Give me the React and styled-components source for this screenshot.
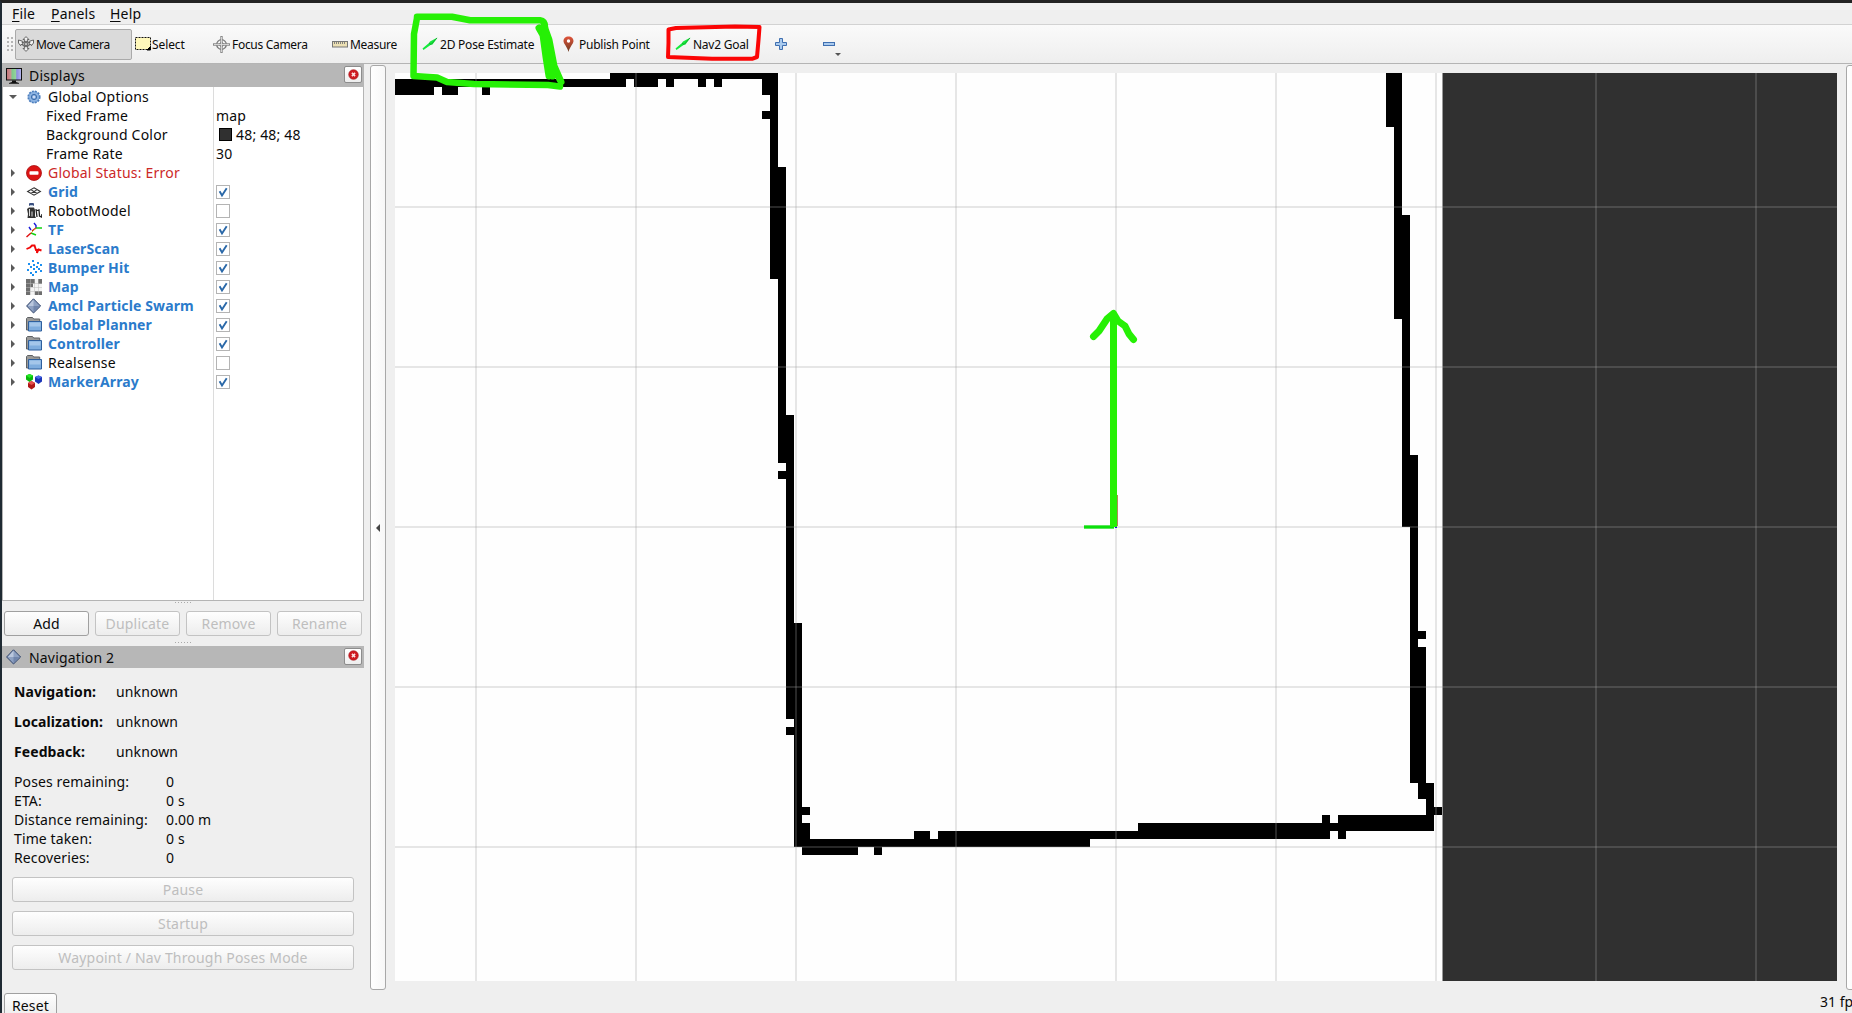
import React from 'react';
import styled, { createGlobalStyle } from 'styled-components';

const GlobalStyle = createGlobalStyle`
  * { box-sizing: border-box; }
  body { margin: 0; overflow: hidden; background: #efefef; }
  svg { display: block; flex: none; }
`;

const FONT = `"Noto Sans", "Open Sans", sans-serif`;

const Window = styled.div`
  position: relative;
  display: flex;
  flex-direction: column;
  width: 1852px;
  height: 1013px;
  overflow: hidden;
  background: #efefef;
  border-top: 3px solid #222;
  border-left: 2px solid #1f2a33;
  font-family: ${FONT};
  font-size: 14px;
  letter-spacing: 0.18px;
  color: #0a0a0a;
  white-space: nowrap;
`;

const MenuBar = styled.nav`
  display: flex;
  flex: none;
  height: 22px;
  padding-left: 10px;
  border-bottom: 1px solid #d2d2d2;
`;

const MenuItem = styled.span`
  width: ${(p) => p.$w}px;
  line-height: 21px;
`;

const Mnemonic = styled.span`
  text-decoration: underline;
  text-underline-offset: 2px;
`;

const ToolBar = styled.div`
  display: flex;
  flex: none;
  align-items: center;
  height: 39px;
  padding-left: 4px;
  background: linear-gradient(#fafafa, #eeeeee);
  border-bottom: 1px solid #b4b4b4;
`;

const Grip = styled.div`
  width: 9px;
  height: 17px;
  background-image: radial-gradient(circle, #b5b5b5 0.8px, transparent 1px);
  background-size: 4px 4px;
`;

const Tool = styled.button`
  display: flex;
  flex: none;
  align-items: center;
  gap: ${(p) => p.$gap ?? 2}px;
  width: ${(p) => p.$w}px;
  height: 31px;
  padding: 0 0 0 2px;
  border: 1px solid ${(p) => (p.$active ? '#aaaaaa' : 'transparent')};
  border-radius: 2px;
  background: ${(p) => (p.$active ? '#dadada' : 'transparent')};
  font: 12px ${FONT};
  letter-spacing: ${(p) => p.$ls ?? -0.22}px;
  color: #0a0a0a;
`;

const Body = styled.div`
  display: flex;
  flex: none;
  height: 926px;
`;

const SidePanel = styled.aside`
  display: flex;
  flex-direction: column;
  flex: none;
  width: 362px;
`;

const DockTitle = styled.div`
  display: flex;
  flex: none;
  align-items: center;
  height: ${(p) => p.$h}px;
  padding: 0 2px 0 4px;
  background: #b7b7b7;
`;

const DockName = styled.span`
  flex: 1;
  padding-left: 7px;
`;

const CloseButton = styled.button`
  display: flex;
  align-items: center;
  justify-content: center;
  width: 18px;
  height: 17px;
  padding: 0;
  margin-bottom: 2px;
  border: 1px solid #8d8d8d;
  border-radius: 2px;
  background: linear-gradient(#fff, #eee);
`;

const Tree = styled.div`
  flex: none;
  height: 514px;
  background: linear-gradient(#dcdcdc, #dcdcdc) 210px 0 / 1px 100% no-repeat #fff;
  border: 1px solid #b4b4b4;
  border-top: 0;
`;

const TreeRow = styled.div`
  display: grid;
  grid-template-columns: 23px 22px 168px 1fr;
  align-items: center;
  height: 19px;
  line-height: 19px;
`;

const Expander = styled.div`
  width: 0;
  margin-left: ${(p) => (p.$open ? 6 : 8)}px;
  border: 4px solid transparent;
  ${(p) =>
    p.$open
      ? 'border-top-color: #5a5a5a; border-bottom-width: 0;'
      : 'border-left-color: #5a5a5a; border-right-width: 0;'}
`;

const RowName = styled.span`
  margin-left: ${(p) => (p.$leaf ? -2 : 0)}px;
  color: ${(p) => (p.$tone === 'on' ? '#2b7bcb' : p.$tone === 'error' ? '#cc2828' : '#0a0a0a')};
  font-weight: ${(p) => (p.$tone === 'on' ? 700 : 400)};
  letter-spacing: ${(p) => (p.$tone === 'on' ? 0.13 : 0.21)}px;
`;

const RowValue = styled.span`
  display: flex;
  align-items: center;
  gap: 4px;
`;

const Swatch = styled.span`
  width: 13px;
  height: 13px;
  margin-left: 3px;
  border: 1px solid #000;
  background: #303030;
`;

const Check = styled.span`
  display: block;
  width: 14px;
  height: 14px;
  border: 1px solid #b4b4b4;
  background: #fff;
`;

const Splitter = styled.div`
  flex: none;
  align-self: center;
  width: 18px;
  height: 3px;
  margin: ${(p) => p.$m};
  background: radial-gradient(circle, #aaa 0.7px, transparent 1px) 0 0 / 3px 3px;
`;

const ButtonRow = styled.div`
  display: flex;
  flex: none;
  gap: 6px;
  padding-left: 2px;
`;

const PushButton = styled.button`
  flex: none;
  width: ${(p) => p.$w}px;
  height: 25px;
  padding: 0;
  border: 1px solid ${(p) => (p.disabled ? '#c3c3c3' : '#a0a0a0')};
  border-radius: 3px;
  background: linear-gradient(#fefefe, #ededed);
  font: 14px ${FONT};
  line-height: 22px;
  letter-spacing: 0.18px;
  color: ${(p) => (p.disabled ? '#bebebe' : '#0a0a0a')};
`;

const NavPanel = styled.div`
  display: flex;
  flex-direction: column;
  padding: 8px 0 0 10px;
`;

const StateRow = styled.div`
  display: grid;
  grid-template-columns: ${(p) => p.$col}px 1fr;
  align-items: center;
  padding-left: 2px;
  height: ${(p) => p.$h}px;
  line-height: 19px;
`;

const StatList = styled.div`
  margin-top: 6px;
`;

const Label = styled.span`
  font-weight: ${(p) => (p.$bold ? 700 : 400)};
  letter-spacing: ${(p) => (p.$bold ? 0.08 : 0.12)}px;
`;

const NavButtons = styled.div`
  display: flex;
  flex-direction: column;
  gap: 9px;
  margin-top: 10px;
`;

const CollapseBar = styled.div`
  display: flex;
  flex: none;
  align-items: center;
  justify-content: center;
  width: 16px;
  height: 925px;
  margin: 1px 0 0 6px;
  border: 1px solid #a8a8a8;
  border-radius: 3px;
  background: linear-gradient(90deg, #fff, #f7f7f7);
`;

const Viewport = styled.main`
  flex: none;
  width: 1442px;
  height: 908px;
  margin: 9px 0 0 9px;
  background: #303030;
`;

const RightBar = styled(CollapseBar)`
  margin-left: 9px;
`;

const StatusBar = styled.footer`
  display: flex;
  flex: none;
  justify-content: space-between;
  padding: 3px 0 0 2px;
`;

const Fps = styled.span`
  width: 32px;
  line-height: 18px;
  letter-spacing: 0;
`;

const Annotations = styled.svg`
  position: absolute;
  left: -2px;
  top: -3px;
  pointer-events: none;
`;

/* ---------- icons ---------- */

const Svg = ({ w = 16, h = 16, children }) => (
  <svg width={w} height={h} viewBox={`0 0 ${w} ${h}`}>{children}</svg>
);

const MoveIcon = () => (
  <Svg>
    <g fill="#f4f4f4" stroke="#555" strokeWidth="0.9">
      <path d="M8 .6l3 3H9.3v3H6.7v-3H5z" />
      <path d="M8 15.4l3-3H9.3v-3H6.7v3H5z" />
      <path d="M.5 4l4 1.2-.6 1.1 3 1.2-.5 1.8-3.4-1-.4 1.4L.5 7z" />
      <path d="M15.5 4l-4 1.2.6 1.1-3 1.2.5 1.8 3.4-1 .4 1.4L15.5 7z" />
    </g>
    <ellipse cx="8" cy="8" rx="3.6" ry="2.6" fill="none" stroke="#555" strokeWidth=".8" />
  </Svg>
);

const SelectIcon = () => (
  <Svg h={14}>
    <rect x=".5" y=".5" width="15" height="12" fill="#fff8bb" stroke="#111" strokeDasharray="2 1" />
    <path d="M15.5 9.5v3.500h-3.500z" fill="#000" stroke="#000" />
  </Svg>
);

const FocusIcon = () => (
  <Svg w={17} h={17}>
    <g fill="none" stroke="#777">
      <circle cx="8.5" cy="8.5" r="4.8" strokeWidth="1.3" />
      <circle cx="8.5" cy="8.5" r="2" />
      <path d="M8.5 0v17M0 8.5h17" strokeWidth="2.4" stroke="#8a8a8a" />
      <path d="M8.5 1v15M1 8.5h15" strokeWidth=".9" stroke="#ddd" />
    </g>
  </Svg>
);

const MeasureIcon = () => (
  <Svg h={7}>
    <rect x=".5" y=".5" width="15" height="5.5" fill="#ece0b4" stroke="#777" />
    <path d="M2.5 1v2M4.5 1v2M6.5 1v2M8.5 1v2M10.5 1v2M12.5 1v2" stroke="#777" strokeWidth=".9" />
  </Svg>
);

const ArrowIcon = () => (
  <Svg w={16} h={14}>
    <path d="M.5 11.5L7 6l1-1.5L15.5.5 10.5 7.5 8.500 8 1.500 13z" fill="#15ea3c" />
    <path d="M7 6l2 1.5L15 1" fill="none" stroke="#14a52c" strokeWidth=".9" />
  </Svg>
);

const PinIcon = () => (
  <Svg w={11} h={16}>
    <defs>
      <linearGradient id="pin" x1="0" y1="0" x2="0" y2="1">
        <stop offset="0" stopColor="#e2543b" /><stop offset="1" stopColor="#6b3a20" />
      </linearGradient>
    </defs>
    <path d="M5.5.4C2.5.4.5 2.5.5 5c0 3 3.800 5.500 5 11 1.200-5.500 5-8 5-11 0-2.500-2-4.600-5-4.600z" fill="url(#pin)" />
    <circle cx="5.5" cy="5" r="1.7" fill="#fff" />
  </Svg>
);

const PlusIcon = () => (
  <Svg w={12} h={12}>
    <path d="M4.5.5h3v4h4v3h-4v4h-3v-4h-4v-3h4z" fill="#a9caee" stroke="#3f6fb0" />
  </Svg>
);

const MinusIcon = () => (
  <Svg w={12} h={4}>
    <rect x=".5" y=".5" width="11" height="3" fill="#a9caee" stroke="#3f6fb0" />
  </Svg>
);

const DropArrow = () => (
  <Svg w={6} h={24}>
    <path d="M0 21h6l-3 3z" fill="#555" />
  </Svg>
);

const DisplaysIcon = () => (
  <Svg>
    <defs>
      <linearGradient id="scr" x1="0" x2="1" y1="0" y2="0">
        <stop offset="0" stopColor="#c47378" /><stop offset=".3" stopColor="#c99494" />
        <stop offset=".36" stopColor="#7dc98b" /><stop offset=".62" stopColor="#95d29c" />
        <stop offset=".68" stopColor="#8c8cdf" /><stop offset="1" stopColor="#b9b9ee" />
      </linearGradient>
    </defs>
    <rect x=".5" y=".5" width="15" height="11.5" fill="url(#scr)" stroke="#111" />
    <path d="M6 12.5h4v1.500l3 1v.8H3V15l3-1z" fill="#111" />
  </Svg>
);

const CloseIcon = () => (
  <Svg w={11} h={12}>
    <circle cx="5.5" cy="5.5" r="4.8" fill="#cf1b22" stroke="#a3161b" strokeWidth=".6" />
    <path d="M3.9 3.900l3.200 3.200M7.100 3.900L3.900 7.100" stroke="#fbe3e3" strokeWidth="1.500" />
  </Svg>
);

const GearIcon = () => (
  <Svg w={16} h={14}>
    <g transform="translate(1 0)">
      <circle cx="7" cy="7" r="5.7" fill="#7fa9da" stroke="#4d7fbf" strokeWidth="1.8" strokeDasharray="2 1" />
      <circle cx="7" cy="7" r="4.7" fill="#8cb3e2" />
      <circle cx="7" cy="7" r="2.6" fill="none" stroke="#3b6aa9" />
      <circle cx="7" cy="7" r=".9" fill="#eef" />
    </g>
  </Svg>
);

const ErrorIcon = () => (
  <Svg>
    <circle cx="8" cy="8" r="7.5" fill="#dc1414" stroke="#a80f0f" strokeWidth=".8" />
    <rect x="3.5" y="6.3" width="9" height="3.4" rx=".8" fill="#fff" />
  </Svg>
);

const GridIcon = () => (
  <Svg w={16} h={10}>
    <path
      d="M8 .8L14.400 4.500 8 8.200 1.600 4.500zM4.800 2.600l6.400 3.800M11.200 2.600L4.800 6.400"
      fill="none"
      stroke="#333"
      strokeWidth="1.1"
    />
  </Svg>
);

const RobotIcon = () => (
  <Svg>
    <rect x="3" y="0" width="5" height="3" rx="1" fill="#3a4f80" />
    <rect x="4" y="2" width="3" height="1.2" fill="#bcd" />
    <path d="M1 6l2-1.5h5L9 7v6l1 2H1.500L2 11z" fill="#333" />
    <path d="M3.5 6v7M6 8.5v5" stroke="#ddd" />
    <path d="M10 6l1 8M10 8l3-1 .5 6 2 1 .5-3" fill="none" stroke="#222" strokeWidth="1.3" />
  </Svg>
);

const TfIcon = () => (
  <Svg>
    <path d="M8 1l2 2.5V6M3 5l2 3" fill="none" stroke="#1b1bd8" strokeWidth="1.4" />
    <path d="M10 6h6M5 11l5 2" fill="none" stroke="#12d312" strokeWidth="1.5" />
    <path d="M10 6L6 9M5 11l-4.500 4" fill="none" stroke="#e01212" strokeWidth="1.5" />
    <path d="M9.5 6.500L5 11" stroke="#c9a227" />
  </Svg>
);

const LaserIcon = () => (
  <Svg h={10}>
    <path d="M.5 5L4 3.500 6 1.500h2.500L10 6h1v3l1.500-3.500 3 1" fill="none" stroke="#f00808" strokeWidth="1.9" />
  </Svg>
);

const DOTS = [[6, 0], [11, 2], [2, 3], [7, 4], [14, 4], [4, 6], [10, 6], [1, 9], [7, 8], [12, 8], [14, 10], [4, 12], [9, 11], [6, 14]];
const BumperIcon = () => (
  <Svg>{DOTS.map(([x, y]) => <rect key={`${x}-${y}`} x={x} y={y} width="2" height="2" fill="#1c8ff0" />)}</Svg>
);

const MapIcon = () => (
  <Svg>
    <rect width="16" height="16" fill="#f4f4f4" />
    <path d="M0 0h9v4.500H7V8H4v8H0zM12 0h4v5h-4zM9 12h7v4H9z" fill="#6e6e6e" />
    <path d="M4.5 0v16M8.5 0v16M12.5 0v16M0 4.500h16M0 8.500h16M0 12.500h16" stroke="#bbb" strokeWidth=".5" />
  </Svg>
);

const DiamondIcon = () => (
  <Svg>
    <path d="M7.5.8L14.600 8l-7.100 7L.6 8z" fill="#8ea1c2" stroke="#2f4369" />
    <path d="M7.5 1.500L2 8h5.500z" fill="#bac7dd" />
    <path d="M7.5 14L13.500 8h-6z" fill="#7085ab" />
  </Svg>
);

const FolderIcon = () => (
  <Svg h={15}>
    <path d="M.5 1.500l1-1h5l1.200 1.500h6v11H.5z" fill="#9a9a98" stroke="#5e6164" />
    <path d="M2.5 4.500h13v9.500h-13z" fill="#7fadde" stroke="#2e5f9d" />
    <path d="M3.5 5.500h11v4h-11z" fill="#a4c6ea" />
  </Svg>
);

const MarkerIcon = () => (
  <Svg>
    <path d="M0 1.500L3.500 0 7 1.500v4L3.500 8 0 5.500z" fill="#0bb60b" />
    <path d="M0 1.500L3.500 0 7 1.500 3.500 4z" fill="#26ea26" />
    <path d="M9 3l3.500-1.500L16 3v4.500L12.500 10 9 7.500z" fill="#1b35b8" />
    <path d="M9 3l3.500-1.500L16 3l-3.500 2z" fill="#4d6be8" />
    <path d="M2 9l3.500-2L9 9v4l-3.500 2.500L2 13z" fill="#b01818" />
    <path d="M2 9l3.500-2L9 9l-3.500 2z" fill="#e65050" />
  </Svg>
);

const Tick = () => (
  <Svg w={12} h={12}>
    <path d="M2.6 5.300L5 9.500 9.700 2.200" fill="none" stroke="#2a68a8" strokeWidth="1.9" />
  </Svg>
);

/* ---------- data ---------- */

const DISPLAYS = [
  { name: 'Global Options', icon: <GearIcon />, open: true },
  { name: 'Fixed Frame', leaf: true, value: 'map' },
  { name: 'Background Color', leaf: true, value: '48; 48; 48', swatch: true },
  { name: 'Frame Rate', leaf: true, value: '30' },
  { name: 'Global Status: Error', icon: <ErrorIcon />, tone: 'error' },
  { name: 'Grid', icon: <GridIcon />, checked: true },
  { name: 'RobotModel', icon: <RobotIcon />, checked: false },
  { name: 'TF', icon: <TfIcon />, checked: true },
  { name: 'LaserScan', icon: <LaserIcon />, checked: true },
  { name: 'Bumper Hit', icon: <BumperIcon />, checked: true },
  { name: 'Map', icon: <MapIcon />, checked: true },
  { name: 'Amcl Particle Swarm', icon: <DiamondIcon />, checked: true },
  { name: 'Global Planner', icon: <FolderIcon />, checked: true },
  { name: 'Controller', icon: <FolderIcon />, checked: true },
  { name: 'Realsense', icon: <FolderIcon />, checked: false },
  { name: 'MarkerArray', icon: <MarkerIcon />, checked: true },
];

const STATES = [['Navigation:', 'unknown'], ['Localization:', 'unknown'], ['Feedback:', 'unknown']];
const STATS = [
  ['Poses remaining:', '0'], ['ETA:', '0 s'], ['Distance remaining:', '0.00 m'],
  ['Time taken:', '0 s'], ['Recoveries:', '0'],
];

/* occupied map cells as [x1, y1, x2, y2] */
const WALLS = [
  [395, 79, 626, 87], [395, 87, 434, 95], [442, 87, 458, 95], [482, 87, 490, 95],
  [610, 73, 778, 79], [634, 79, 658, 87], [666, 79, 674, 87], [698, 79, 706, 87], [714, 79, 722, 87],
  [762, 79, 778, 95], [770, 95, 778, 279], [762, 111, 770, 119], [778, 167, 786, 463],
  [786, 415, 794, 719], [778, 471, 786, 479], [794, 623, 802, 847], [786, 727, 794, 735],
  [802, 807, 810, 815], [802, 823, 810, 847], [810, 839, 1090, 847], [802, 847, 858, 855], [874, 847, 882, 855],
  [914, 831, 930, 839], [938, 831, 1330, 839], [1138, 823, 1434, 831], [1322, 815, 1330, 823],
  [1338, 815, 1434, 823], [1338, 831, 1346, 839],
  [1386, 73, 1394, 127], [1394, 73, 1402, 319], [1402, 215, 1410, 527], [1410, 455, 1418, 783],
  [1418, 631, 1426, 639], [1418, 647, 1426, 799], [1426, 783, 1434, 815], [1434, 807, 1442, 815],
];
const GRID_X = [475, 635, 795, 955, 1115, 1275, 1435, 1595, 1755];
const GRID_Y = [206, 366, 526, 686, 846];

const OccupancyMap = () => (
  <svg width="1442" height="908" viewBox="395 73 1442 908" shapeRendering="crispEdges">
    <rect x="395" y="73" width="1047" height="908" fill="#fefefe" />
    <rect x="1442" y="73" width="1" height="908" fill="#999" />
    {WALLS.map(([x1, y1, x2, y2], i) => (
      <rect key={i} x={x1} y={y1} width={x2 - x1} height={y2 - y1} fill="#000" />
    ))}
    <g fill="#a0a0a0" fillOpacity=".25">
      {GRID_X.map((x) => <rect key={x} x={x} y="73" width="2" height="908" />)}
      {GRID_Y.map((y) => <rect key={y} x="395" y={y} width="1442" height="2" />)}
    </g>
    <rect x="1084" y="525" width="30" height="4" fill="#5be65b" />
    <rect x="1084" y="526" width="30" height="2" fill="#0be00b" />
    <rect x="1117" y="495" width="1" height="31" fill="#b08a5a" />
    <rect x="1115" y="526" width="2" height="2" fill="#1414e0" />
  </svg>
);

const Marks = () => (
  <Annotations width="1852" height="1013" viewBox="0 0 1852 1013" fill="none" strokeLinecap="round" strokeLinejoin="round">
    <g stroke="#26f005">
      <path strokeWidth="6.5" d="M417 18L414 34L413.500 76L437 77.500L447 82L474 84L548 85L560 86.500" />
      <path strokeWidth="6.5" d="M417 16.700H452L470 20.300H540Q545 21 545 27" />
      <path strokeWidth="7" d="M539 28L543 35L546 57L549 76" />
      <path strokeWidth="7" d="M544 26L549 40L554 66L561 82" />
      <path strokeWidth="7" d="M545 32L550 60L553 76" />
      <path strokeWidth="7" d="M1113.500 314V527" strokeLinecap="butt" />
      <path strokeWidth="7" d="M1093.500 336.500L1099 331L1107 319L1113.500 313.500L1118 321L1125 326L1129 334L1133.500 339.500" />
    </g>
    <path d="M551 80L556 80.500L558 83z" fill="#000" />
    <path stroke="#fb0505" strokeWidth="4" d="M668.500 29.500L676 28L735 26.500L759.500 27L758.500 40L757 57L752 58.800L712 58.800L668 57L668.500 43z" />
  </Annotations>
);

export default function App() {
  return (
    <Window>
      <GlobalStyle />
      <MenuBar>
        <MenuItem $w={39}><Mnemonic>F</Mnemonic>ile</MenuItem>
        <MenuItem $w={59}><Mnemonic>P</Mnemonic>anels</MenuItem>
        <MenuItem $w={40}><Mnemonic>H</Mnemonic>elp</MenuItem>
      </MenuBar>
      <ToolBar>
        <Grip />
        <Tool $w={117} $active $ls={-0.35}><MoveIcon />Move Camera</Tool>
        <Tool $w={78} $gap={1} $ls={-0.1}><SelectIcon />Select</Tool>
        <Tool $w={119} $ls={-0.3}><FocusIcon />Focus Camera</Tool>
        <Tool $w={90} $ls={-0.3}><MeasureIcon />Measure</Tool>
        <Tool $w={141}><ArrowIcon />2D Pose Estimate</Tool>
        <Tool $w={112} $gap={5} $ls={-0.25}><PinIcon />Publish Point</Tool>
        <Tool $w={100} $ls={-0.25}><ArrowIcon />Nav2 Goal</Tool>
        <Tool $w={48}><PlusIcon /></Tool>
        <Tool $w={15}><MinusIcon /></Tool>
        <DropArrow />
      </ToolBar>
      <Body>
        <SidePanel>
          <DockTitle $h={23}>
            <DisplaysIcon /><DockName>Displays</DockName>
            <CloseButton><CloseIcon /></CloseButton>
          </DockTitle>
          <Tree>
            {DISPLAYS.map((d) => (
              <TreeRow key={d.name}>
                <div>{!d.leaf && <Expander $open={d.open} />}</div>
                <div>{d.icon}</div>
                <RowName $leaf={d.leaf} $tone={d.tone || (d.checked ? 'on' : undefined)}>{d.name}</RowName>
                <RowValue>
                  {d.swatch && <Swatch />}
                  {d.value}
                  {d.checked !== undefined && <Check>{d.checked && <Tick />}</Check>}
                </RowValue>
              </TreeRow>
            ))}
          </Tree>
          <Splitter $m="0 0 7px" />
          <ButtonRow>
            <PushButton $w={85}>Add</PushButton>
            <PushButton $w={85} disabled>Duplicate</PushButton>
            <PushButton $w={85} disabled>Remove</PushButton>
            <PushButton $w={85} disabled>Rename</PushButton>
          </ButtonRow>
          <Splitter $m="5px 0 2px" />
          <DockTitle $h={22}>
            <DiamondIcon /><DockName>Navigation 2</DockName>
            <CloseButton><CloseIcon /></CloseButton>
          </DockTitle>
          <NavPanel>
            {STATES.map(([k, v]) => (
              <StateRow key={k} $col={102} $h={30}><Label $bold>{k}</Label><Label>{v}</Label></StateRow>
            ))}
            <StatList>
              {STATS.map(([k, v]) => (
                <StateRow key={k} $col={152} $h={19}><Label>{k}</Label><Label>{v}</Label></StateRow>
              ))}
            </StatList>
            <NavButtons>
              <PushButton $w={342} disabled>Pause</PushButton>
              <PushButton $w={342} disabled>Startup</PushButton>
              <PushButton $w={342} disabled>Waypoint / Nav Through Poses Mode</PushButton>
            </NavButtons>
          </NavPanel>
        </SidePanel>
        <CollapseBar>
          <svg width="4" height="8" viewBox="0 0 4 8"><path d="M4 0v8L0 4z" fill="#444" /></svg>
        </CollapseBar>
        <Viewport><OccupancyMap /></Viewport>
        <RightBar />
      </Body>
      <StatusBar>
        <PushButton $w={53}>Reset</PushButton>
        <Fps>31 fps</Fps>
      </StatusBar>
      <Marks />
    </Window>
  );
}
